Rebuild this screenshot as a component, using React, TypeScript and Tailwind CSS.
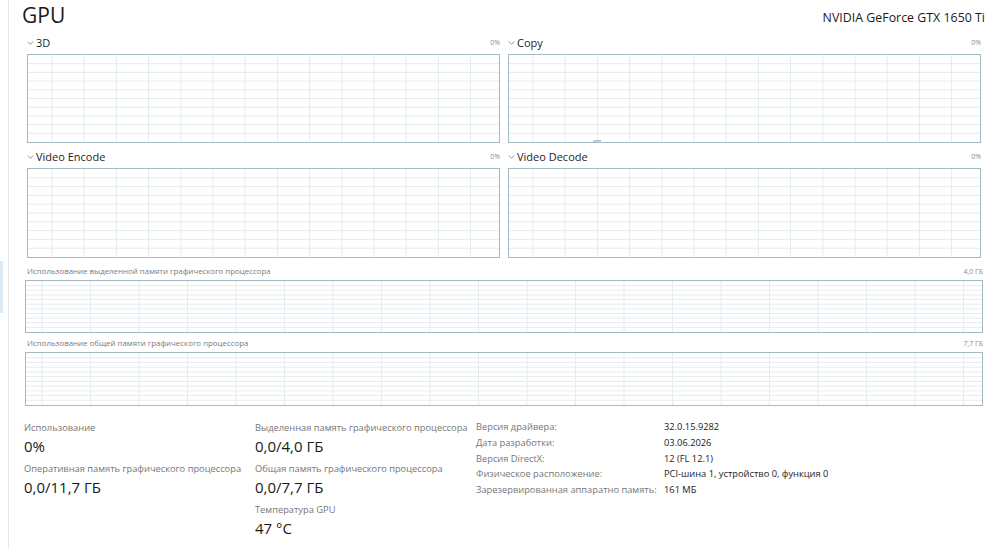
const FONT = { fontFamily: '"Open Sans", "Noto Sans", sans-serif' };

type GridProps = { cols: number; rows: number; colStep: number; colOffset: number; blip?: boolean };

function Grid({ cols, rows, colStep, colOffset, blip }: GridProps) {
    const xs = Array.from({ length: cols }, (_, i) => colOffset + i * colStep);
    const ys = Array.from({ length: rows - 1 }, (_, i) => ((i + 1) * 100) / rows);
    return (
        <svg className="absolute inset-0 h-full w-full" preserveAspectRatio="none">
            {ys.map((y) => (
                <line key={"h" + y} x1="0" x2="100%" y1={`${y}%`} y2={`${y}%`} stroke="#e4ecf0" strokeWidth="1" />
            ))}
            {xs.map((x) => (
                <line key={"v" + x} x1={x} x2={x} y1="0" y2="100%" stroke="#e4ecf0" strokeWidth="1" />
            ))}
            {blip && <line x1="84" x2="92" y1="99%" y2="98.5%" stroke="#6f9fb3" strokeWidth="1" />}
        </svg>
    );
}

function Chevron() {
    return (
        <svg width="7" height="6" viewBox="0 0 7 6" className="mr-[2px]">
            <path d="M0.8 1.5 L3.5 4.3 L6.2 1.5" fill="none" stroke="#8a8a8a" strokeWidth="0.9" />
        </svg>
    );
}

function SmallChart({ title, h, blip }: { title: string; h: string; blip?: boolean }) {
    return (
        <div className="flex flex-col">
            <div className="flex h-[14px] items-center justify-between mb-[4px]">
                <div className="flex items-center text-[11px] text-[#1e1e1e]">
                    <Chevron />
                    <span>{title}</span>
                </div>
                <span className="text-[7px] text-[#8c8c8c]">0%</span>
            </div>
            <div className={`relative border border-[#a3bac3] bg-white ${h}`}>
                <Grid cols={14} rows={10} colStep={32.2} colOffset={24} blip={blip} />
            </div>
        </div>
    );
}

function WideChart({ title, max, h }: { title: string; max: string; h: string }) {
    return (
        <div className="flex flex-col">
            <div className="flex h-[12px] items-center justify-between mb-[2px] pl-[2px]">
                <span className="text-[7.9px] text-[#7a7a7a]">{title}</span>
                <span className="text-[7px] text-[#8c8c8c]">{max}</span>
            </div>
            <div className={`relative border border-[#a3bac3] bg-white ${h}`}>
                <Grid cols={20} rows={11} colStep={48.5} colOffset={16} />
            </div>
        </div>
    );
}

function Stat({ label, value }: { label: string; value: string }) {
    return (
        <div className="mb-[5px]">
            <div className="whitespace-nowrap text-[9.3px] leading-[14px] text-[#767676]">{label}</div>
            <div className="text-[15px] leading-[22px] text-[#1a1a1a]">{value}</div>
        </div>
    );
}

const DETAILS = [
    ["Версия драйвера:", "32.0.15.9282"],
    ["Дата разработки:", "03.06.2026"],
    ["Версия DirectX:", "12 (FL 12.1)"],
    ["Физическое расположение:", "PCI-шина 1, устройство 0, функция 0"],
    ["Зарезервированная аппаратно память:", "161 МБ"],
];

export default function App() {
    return (
        <div className="flex h-[549px] w-[1000px] overflow-hidden bg-white" style={FONT}>
            <div className="w-[9px] shrink-0 border-r border-[#e6e6e6]">
                <div className="mt-[261px] h-[52px] w-[3px] bg-[#dce8f4]" />
            </div>

            <div className="flex flex-1 flex-col pl-[16px] pr-[17px]">
                <div className="flex h-[36px] items-start justify-between">
                    <h1 className="-ml-[3px] mt-[1px] text-[21px] leading-[28px] text-[#1a1a1a]">GPU</h1>
                    <span className="-mr-[2px] mt-[9px] text-[12.4px] text-[#1a1a1a]">NVIDIA GeForce GTX 1650 Ti</span>
                </div>

                <div className="mx-[2px] grid grid-cols-2 gap-x-[8px] gap-y-[7px]">
                    <SmallChart title="3D" h="h-[89px]" />
                    <SmallChart title="Copy" h="h-[89px]" blip />
                    <SmallChart title="Video Encode" h="h-[90px]" />
                    <SmallChart title="Video Decode" h="h-[90px]" />
                </div>

                <div className="mt-[8px] flex flex-col gap-[5px]">
                    <WideChart title="Использование выделенной памяти графического процессора" max="4,0 ГБ" h="h-[53px]" />
                    <WideChart title="Использование общей памяти графического процессора" max="7,7 ГБ" h="h-[54px]" />
                </div>

                <div className="mt-[15px] flex">
                    <div className="w-[231px] -ml-[1px]">
                        <Stat label="Использование" value="0%" />
                        <Stat label="Оперативная память графического процессора" value="0,0/11,7 ГБ" />
                    </div>
                    <div className="w-[221px]">
                        <Stat label="Выделенная память графического процессора" value="0,0/4,0 ГБ" />
                        <Stat label="Общая память графического процессора" value="0,0/7,7 ГБ" />
                        <Stat label="Температура GPU" value="47 °C" />
                    </div>
                    <div className="-mt-[2px] flex flex-col">
                        {DETAILS.map(([k, v]) => (
                            <div key={k} className="flex whitespace-nowrap text-[9.3px] leading-[15.8px]">
                                <span className="w-[188px] text-[#767676]">{k}</span>
                                <span className="text-[#1a1a1a]">{v}</span>
                            </div>
                        ))}
                    </div>
                </div>
            </div>
        </div>
    );
}
